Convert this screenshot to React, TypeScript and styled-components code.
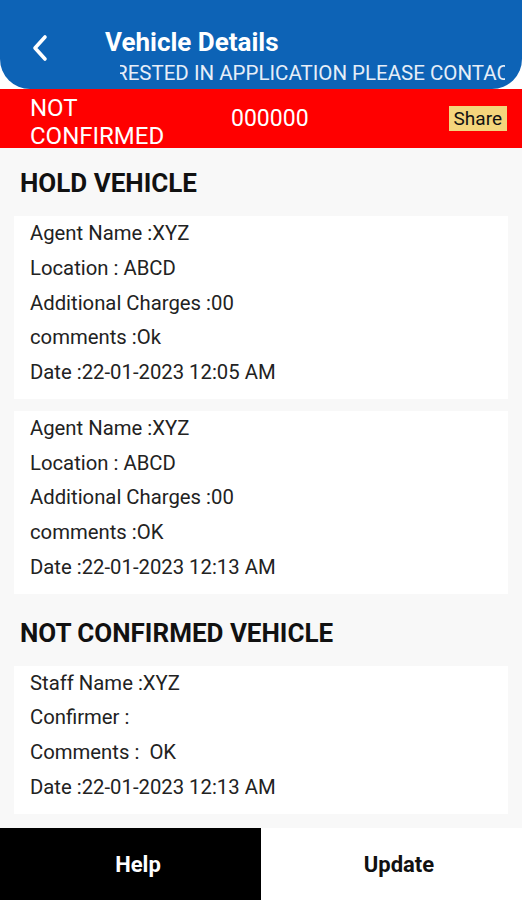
import React from "react";
import styled, { createGlobalStyle } from "styled-components";

const GlobalStyle = createGlobalStyle`
  html, body {
    margin: 0;
    padding: 0;
    background: #ffffff;
    font-family: Roboto, "Noto Sans", Arial, sans-serif;
  }
`;

type Entry = { label: string; value: string };

const holdEntries: Entry[][] = [
  [
    { label: "Agent Name :", value: "XYZ" },
    { label: "Location : ", value: "ABCD" },
    { label: "Additional Charges :", value: "00" },
    { label: "comments :", value: "Ok" },
    { label: "Date :", value: "22-01-2023 12:05 AM" },
  ],
  [
    { label: "Agent Name :", value: "XYZ" },
    { label: "Location : ", value: "ABCD" },
    { label: "Additional Charges :", value: "00" },
    { label: "comments :", value: "OK" },
    { label: "Date :", value: "22-01-2023 12:13 AM" },
  ],
];

const notConfirmedEntries: Entry[][] = [
  [
    { label: "Staff Name :", value: "XYZ" },
    { label: "Confirmer :", value: "" },
    { label: "Comments :  ", value: "OK" },
    { label: "Date :", value: "22-01-2023 12:13 AM" },
  ],
];

const App = () => {
  return (
    <>
      <GlobalStyle />
      <Page>
        <Header>
          <BackButton aria-label="back">
            <svg width="18" height="28" viewBox="0 0 18 28" fill="none">
              <path
                d="M14 3 L4 14 L14 25"
                stroke="#ffffff"
                strokeWidth="3.6"
                strokeLinecap="round"
                strokeLinejoin="round"
              />
            </svg>
          </BackButton>
          <HeaderText>
            <Title>Vehicle Details</Title>
            <Marquee>
              <MarqueeText>
                IF YOU ARE INTERESTED IN APPLICATION PLEASE CONTACT US
              </MarqueeText>
            </Marquee>
          </HeaderText>
        </Header>

        <StatusBar>
          <StatusLabel>
            NOT
            <br />
            CONFIRMED
          </StatusLabel>
          <StatusNumber>000000</StatusNumber>
          <ShareButton>Share</ShareButton>
        </StatusBar>

        <Content>
          <Section>
            <SectionTitle>HOLD VEHICLE</SectionTitle>
            <CardList>
              {holdEntries.map((card, i) => (
                <Card key={i}>
                  {card.map((row, j) => (
                    <Row key={j}>
                      {row.label}
                      {row.value}
                    </Row>
                  ))}
                </Card>
              ))}
            </CardList>
          </Section>

          <Section>
            <SectionTitle>NOT CONFIRMED VEHICLE</SectionTitle>
            <CardList>
              {notConfirmedEntries.map((card, i) => (
                <Card key={i}>
                  {card.map((row, j) => (
                    <Row key={j}>
                      {row.label}
                      {row.value}
                    </Row>
                  ))}
                </Card>
              ))}
            </CardList>
          </Section>
        </Content>

        <BottomBar>
          <BottomButton dark>Help</BottomButton>
          <BottomButton>Update</BottomButton>
        </BottomBar>
      </Page>
    </>
  );
};

export default App;

const Page = styled.div`
  width: 522px;
  height: 900px;
  display: flex;
  flex-direction: column;
  background: #ffffff;
  overflow: hidden;
`;

const Header = styled.div`
  height: 89px;
  flex-shrink: 0;
  background: #0d63b6;
  border-radius: 0 0 30px 30px;
  display: flex;
  align-items: flex-start;
  box-sizing: border-box;
  padding-left: 28px;
`;

const BackButton = styled.button`
  background: none;
  border: none;
  padding: 0;
  margin-top: 34px;
  width: 24px;
  height: 28px;
  display: flex;
  align-items: center;
  justify-content: center;
  cursor: pointer;
`;

const HeaderText = styled.div`
  display: flex;
  flex-direction: column;
  margin-left: 53px;
  flex: 1;
  min-width: 0;
`;

const Title = styled.div`
  color: #ffffff;
  font-size: 26px;
  font-weight: 700;
  line-height: 30px;
  margin-top: 27px;
`;

const Marquee = styled.div`
  margin: 4px 17px 0 15px;
  overflow: hidden;
  white-space: nowrap;
`;

const MarqueeText = styled.div`
  color: #e6eef8;
  font-size: 20.5px;
  line-height: 24px;
  margin-left: -158px;
`;

const StatusBar = styled.div`
  height: 59px;
  flex-shrink: 0;
  background: #ff0000;
  display: flex;
  align-items: center;
  padding: 0 15px 0 30px;
  overflow: hidden;
`;

const StatusLabel = styled.div`
  color: #ffffff;
  font-size: 24px;
  line-height: 28px;
  width: 201px;
  margin-top: 6px;
`;

const StatusNumber = styled.div`
  color: #ffffff;
  font-size: 23px;
  flex: 1;
`;

const ShareButton = styled.button`
  background: #f4d57c;
  border: none;
  color: #111111;
  font-family: Roboto, Arial, sans-serif;
  font-size: 19px;
  height: 25px;
  padding: 0 5px;
  cursor: pointer;
`;

const Content = styled.div`
  flex: 1;
  background: #f8f8f8;
  padding: 18px 14px 0;
  display: flex;
  flex-direction: column;
  gap: 22px;
  overflow: hidden;
`;

const Section = styled.div`
  display: flex;
  flex-direction: column;
`;

const SectionTitle = styled.div`
  font-size: 26px;
  font-weight: 700;
  color: #111111;
  line-height: 34px;
  padding-left: 6px;
  margin-bottom: 16px;
`;

const CardList = styled.div`
  display: flex;
  flex-direction: column;
  gap: 12px;
`;

const Card = styled.div`
  background: #ffffff;
  padding: 0 16px 9px;
`;

const Row = styled.div`
  font-size: 20.3px;
  line-height: 34.75px;
  color: #222222;
  white-space: pre;
`;

const BottomBar = styled.div`
  height: 72px;
  flex-shrink: 0;
  display: flex;
`;

const BottomButton = styled.button<{ dark?: boolean }>`
  flex: 1;
  border: none;
  padding: 0 0 0 15px;
  background: ${({ dark }) => (dark ? "#000000" : "#ffffff")};
  color: ${({ dark }) => (dark ? "#ffffff" : "#111111")};
  font-family: Roboto, Arial, sans-serif;
  font-size: 22px;
  font-weight: 700;
  cursor: pointer;
`;
